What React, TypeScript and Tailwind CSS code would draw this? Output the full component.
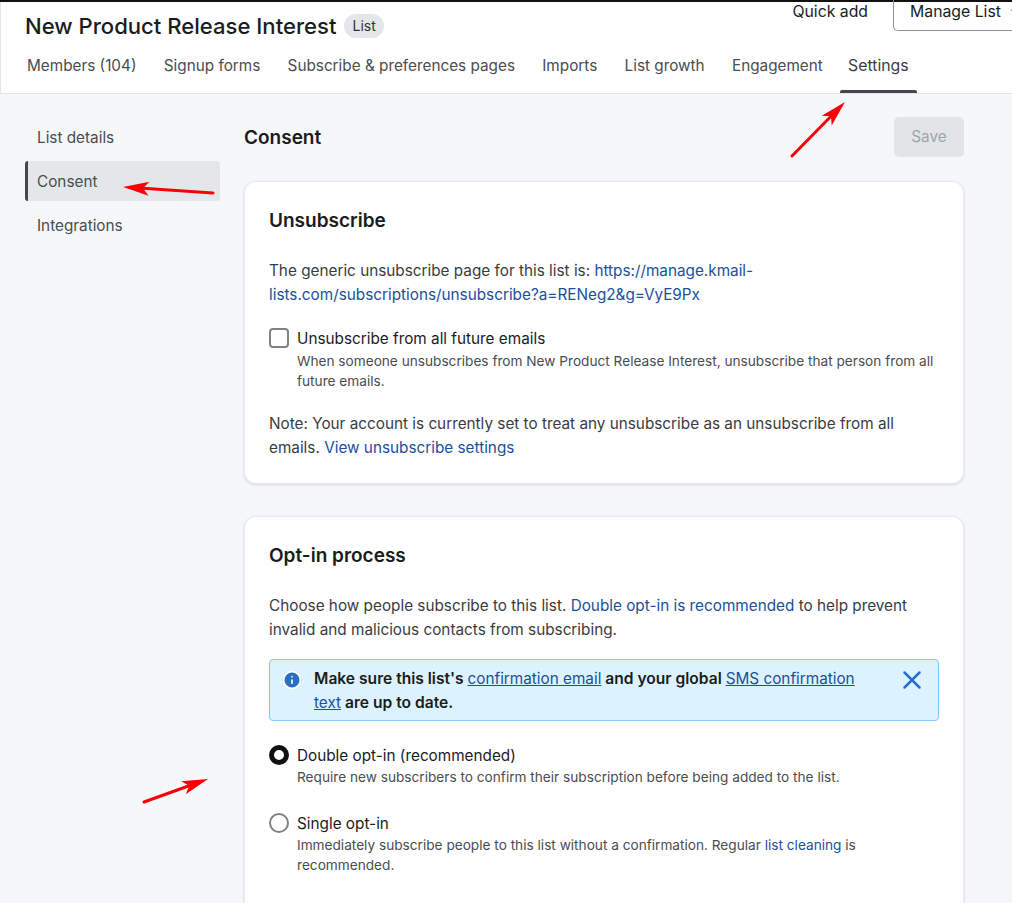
import { X, Info, ChevronDown } from 'lucide-react';

const tabs = ['Members (104)', 'Signup forms', 'Subscribe & preferences pages', 'Imports', 'List growth', 'Engagement', 'Settings'];

function Arrow({ x1, y1, x2, y2 }: { x1: number; y1: number; x2: number; y2: number }) {
  // red annotation arrow, coordinates are page pixels
  const angle = Math.atan2(y2 - y1, x2 - x1);
  const len = 27;
  const spread = 0.26;
  const ax = x2 - len * Math.cos(angle - spread);
  const ay = y2 - len * Math.sin(angle - spread);
  const bx = x2 - len * Math.cos(angle + spread);
  const by = y2 - len * Math.sin(angle + spread);
  const nx = x2 - 20 * Math.cos(angle);
  const ny = y2 - 20 * Math.sin(angle);
  return (
    <svg className="pointer-events-none absolute top-0 left-0" width="1012" height="903" viewBox="0 0 1012 903" fill="none">
      <line x1={x1} y1={y1} x2={nx} y2={ny} stroke="#fb0007" strokeWidth="3" strokeLinecap="round" />
      <polygon points={`${x2},${y2} ${ax},${ay} ${nx},${ny} ${bx},${by}`} fill="#fb0007" />
    </svg>
  );
}

export default function App() {
  return (
    <div className="relative h-[903px] w-[1012px] overflow-hidden bg-[#f6f7f9] font-['Inter',sans-serif] text-[15.3px] text-[#1a1c1e]">
      <div className="h-[2px] bg-[#111]" />

      {/* Header */}
      <div className="relative h-[92px] border-b border-l border-[#e3e6ea] bg-white pl-[24px]">
        <div className="flex items-center gap-2 pt-[9px]">
          <h1 className="text-[22.1px] leading-[30px] font-medium">New Product Release Interest</h1>
          <span className="rounded-full bg-[#e4e7ea] px-2 py-[1px] text-[14px] leading-[22px] text-[#2f3133]">List</span>
        </div>
        <div className="absolute top-[-2px] right-[-20px] flex items-start">
          <span className="mt-[2px] mr-[25px] text-[15.8px] leading-[20px]">Quick add</span>
          <div className="flex h-[31px] w-[139px] items-start gap-[7px] rounded-bl-[5px] border border-t-0 border-r-0 border-[#8e9296] pt-[2px] pl-[16px] text-[15.8px] leading-[20px] whitespace-nowrap">
            Manage List
            <ChevronDown size={16} className="mt-[2px] shrink-0" />
          </div>
        </div>
        <div className="mt-[3px] flex h-[49px] items-start gap-[11.3px]">
          {tabs.map((t) => (
            <div
              key={t}
              className={`relative h-[49px] px-2 pt-[10px] leading-[24px] first:pl-[2px] ${t === 'Settings' ? 'ml-[-2px] text-[15.8px] text-[#3b3e41]' : 'text-[#4a4d50]'}`}
            >
              {t}
              {t === 'Settings' && <div className="absolute right-0 bottom-0 left-0 h-[3px] rounded-t-[2px] bg-[#45484b]" />}
            </div>
          ))}
        </div>
      </div>

      <div className="flex pl-[25px]">
        {/* Sidebar */}
        <nav className="mt-[21px] flex w-[195px] shrink-0 flex-col gap-[2px] text-[#4a4d50]">
          <div className="flex h-[44px] items-center pt-[2px] pl-[12px]">List details</div>
          <div className="flex h-[40px] items-center rounded-[3px] border-l-[3px] border-[#45484b] bg-[#e4e7ea] pt-[2px] pl-[9px]">Consent</div>
          <div className="flex h-[44px] items-center pt-[2px] pl-[12px]">Integrations</div>
        </nav>

        {/* Main */}
        <main className="ml-[24px] w-[720px] shrink-0">
          <div className="flex h-[87px] items-start justify-between pt-[23px]">
            <h2 className="pt-[9px] text-[19px] leading-[24px] font-semibold">Consent</h2>
            <button className="h-[40px] w-[70px] rounded-[5px] bg-[#e2e5e8] text-[#a0a4a8]">Save</button>
          </div>

          <section className="h-[303px] rounded-[12px] border border-[#e8eaed] bg-white px-[24px] pt-[26px] shadow-[0_1px_3px_rgba(0,0,0,0.12)]">
            <h3 className="text-[19px] leading-[26px] font-semibold">Unsubscribe</h3>
            <p className="mt-[25px] leading-[24px] text-[#3a3c3f]">
              The generic unsubscribe page for this list is:{' '}
              <a className="text-[#1c4f9c]">https://manage.kmail-lists.com/subscriptions/unsubscribe?a=RENeg2&amp;g=VyE9Px</a>
            </p>
            <div className="mt-[20px] flex gap-[8px]">
              <div className="mt-[1px] h-[20px] w-[20px] shrink-0 rounded-[4px] border-2 border-[#808386] bg-white" />
              <div>
                <div className="leading-[24px]">Unsubscribe from all future emails</div>
                <div className="text-[13.65px] leading-[20px] text-[#4a4d50]">
                  When someone unsubscribes from New Product Release Interest, unsubscribe that person from all future emails.
                </div>
              </div>
            </div>
            <p className="mt-[21px] leading-[24px] text-[#3a3c3f]">
              Note: Your account is currently set to treat any unsubscribe as an unsubscribe from all emails.{' '}
              <a className="text-[#1c4f9c]">View unsubscribe settings</a>
            </p>
          </section>

          <section className="mt-[32px] h-[500px] rounded-[12px] border border-[#e8eaed] bg-white px-[24px] pt-[26px] shadow-[0_1px_3px_rgba(0,0,0,0.12)]">
            <h3 className="text-[19px] leading-[26px] font-semibold">Opt-in process</h3>
            <p className="mt-[25px] leading-[24px] text-[#3a3c3f]">
              Choose how people subscribe to this list. <a className="text-[#1c4f9c]">Double opt-in is recommended</a> to help prevent invalid and malicious contacts from subscribing.
            </p>
            <div className="mt-[17px] flex h-[62px] rounded-[4px] border border-[#7fc8f8] bg-[#dcf3ff] pt-[7px] pl-[12px]">
              <Info size={20} className="mt-[3px] shrink-0 fill-[#2b6fc2] text-white" />
              <p className="ml-[12px] w-[560px] text-[15.6px] leading-[24px] font-semibold">
                Make sure this list's <a className="text-[15.3px] font-normal text-[#1c4f9c] underline">confirmation email</a> and your global{' '}
                <a className="text-[15.3px] font-normal text-[#1c4f9c] underline">SMS confirmation text</a> are up to date.
              </p>
              <X size={30} strokeWidth={2} className="mt-[-2px] ml-[23px] shrink-0 text-[#2b6fc2]" />
            </div>
            <div className="mt-[22px] flex gap-[8px]">
              <div className="mt-[2px] h-[20px] w-[20px] shrink-0 rounded-full border-[5px] border-[#111] bg-white" />
              <div>
                <div className="pt-[1px] leading-[24px]">Double opt-in (recommended)</div>
                <div className="mt-[-1px] text-[13.65px] leading-[20px] text-[#4a4d50]">
                  Require new subscribers to confirm their subscription before being added to the list.
                </div>
              </div>
            </div>
            <div className="mt-[24px] flex gap-[8px]">
              <div className="mt-[2px] h-[20px] w-[20px] shrink-0 rounded-full border-2 border-[#808386] bg-white" />
              <div>
                <div className="pt-[1px] leading-[24px]">Single opt-in</div>
                <div className="mt-[-1px] text-[13.65px] leading-[20px] text-[#4a4d50]">
                  Immediately subscribe people to this list without a confirmation. Regular <a className="text-[#1c4f9c]">list cleaning</a> is recommended.
                </div>
              </div>
            </div>
          </section>
        </main>
      </div>

      <Arrow x1={792} y1={156} x2={845} y2={102} />
      <Arrow x1={213} y1={193} x2={123} y2={187} />
      <Arrow x1={144} y1={802} x2={208} y2={779} />
    </div>
  );
}
